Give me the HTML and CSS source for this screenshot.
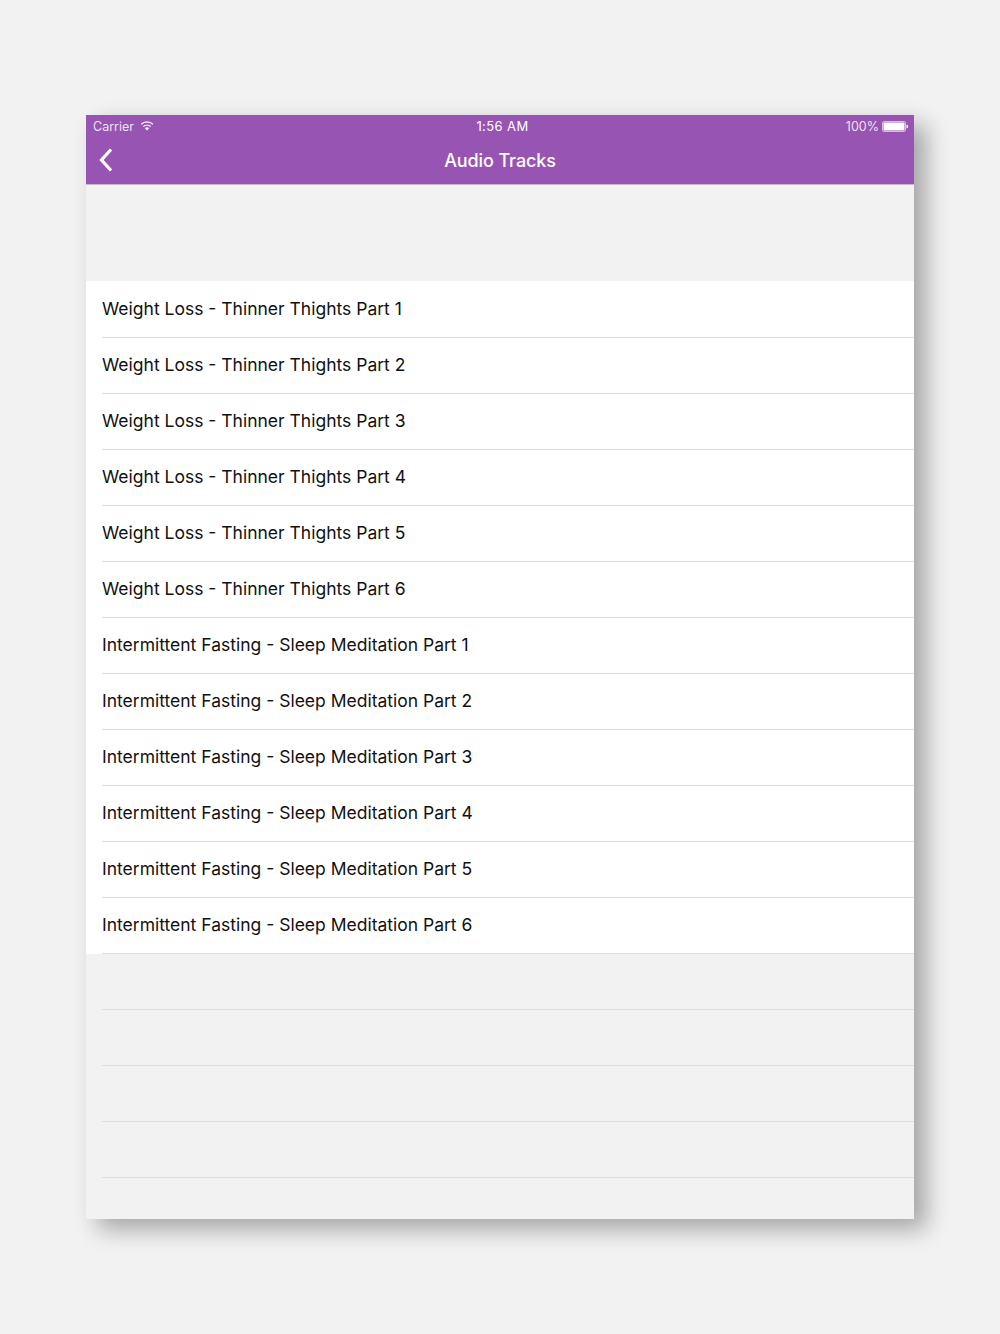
FILE: index.html
```html
<!DOCTYPE html>
<html lang="en">
<head>
<meta charset="utf-8">
<title>Audio Tracks</title>
<link rel="stylesheet" href="styles.css">
</head>
<body>
<main class="screen">
  <header class="appbar">
    <div class="status">
      <div class="status-left">
        <span>Carrier</span>
        <svg class="wifi" width="14" height="11" viewBox="0 0 14 11"><path d="M7 10.600 4.900 8.200a3 3 0 0 1 4.200 0Z" fill="#fff"/><path d="M3.400 6.600a5.200 5.200 0 0 1 7.200 0" fill="none" stroke="#fff" stroke-width="1.400"/><path d="M1.200 4.200a8.400 8.400 0 0 1 11.600 0" fill="none" stroke="#fff" stroke-width="1.400"/></svg>
      </div>
      <span class="clock">1:56 AM</span>
      <div class="status-right">
        <span>100%</span>
        <svg class="battery" width="26" height="11" viewBox="0 0 26 11"><rect x=".5" y=".5" width="23" height="10" rx="1.500" fill="none" stroke="#fff" stroke-opacity=".6"/><rect x="1.500" y="1.500" width="21" height="8" rx=".8" fill="#fff"/><path d="M24.500 3.700h.4a1 1 0 0 1 1 1v1.600a1 1 0 0 1-1 1h-.4Z" fill="#fff"/></svg>
      </div>
    </div>
    <div class="nav">
      <svg class="back" width="14" height="24" viewBox="0 0 14 24"><path d="M12 1.500 2.500 12l9.500 10.500" fill="none" stroke="#fff" stroke-width="3.200"/></svg>
      <h1 class="title">Audio Tracks</h1>
    </div>
  </header>
  <div class="spacer"></div>
  <ul class="list">
    <li class="row">Weight Loss - Thinner Thights Part 1</li>
    <li class="row">Weight Loss - Thinner Thights Part 2</li>
    <li class="row">Weight Loss - Thinner Thights Part 3</li>
    <li class="row">Weight Loss - Thinner Thights Part 4</li>
    <li class="row">Weight Loss - Thinner Thights Part 5</li>
    <li class="row">Weight Loss - Thinner Thights Part 6</li>
    <li class="row">Intermittent Fasting - Sleep Meditation Part 1</li>
    <li class="row">Intermittent Fasting - Sleep Meditation Part 2</li>
    <li class="row">Intermittent Fasting - Sleep Meditation Part 3</li>
    <li class="row">Intermittent Fasting - Sleep Meditation Part 4</li>
    <li class="row">Intermittent Fasting - Sleep Meditation Part 5</li>
    <li class="row">Intermittent Fasting - Sleep Meditation Part 6</li>
  </ul>
  <div class="empty">
    <div class="empty-row"></div>
    <div class="empty-row"></div>
    <div class="empty-row"></div>
    <div class="empty-row"></div>
  </div>
</main>
</body>
</html>
```
FILE: styles.css
```css
html, body {
  margin: 0;
  height: 100%;
}
body {
  background: #f2f2f2;
  font-family: Inter, "Liberation Sans", sans-serif;
  padding: 115px 86px 0;
  box-sizing: border-box;
}
.screen {
  width: 828px;
  height: 1104px;
  background: #f2f2f2;
  box-shadow: 12px 10px 22px rgba(0, 0, 0, 0.32);
  overflow: hidden;
  display: flex;
  flex-direction: column;
}
.appbar {
  height: 70px;
  background: #9854b2;
  color: #fff;
  border-bottom: 1px solid #c9b7d0;
  box-sizing: border-box;
  flex: none;
}
.status {
  height: 22px;
  display: grid;
  grid-template-columns: 1fr auto 1fr;
  align-items: center;
  padding: 0 6px 0 7px;
  font-size: 12.5px;
  color: rgba(255, 255, 255, 0.85);
}
.status-left {
  display: flex;
  align-items: center;
  gap: 6px;
}
.wifi {
  margin-top: -2px;
}
.clock {
  padding-left: 4px;
  font-size: 13px;
  letter-spacing: 0.4px;
  color: #fff;
}
.status-right {
  display: flex;
  justify-content: flex-end;
  align-items: center;
  gap: 3px;
}
.nav {
  height: 47px;
  display: flex;
  align-items: center;
  justify-content: center;
  position: relative;
}
.back {
  position: absolute;
  left: 13px;
  top: 11px;
}
.title {
  margin: 0;
  font-size: 18px;
  font-weight: 500;
  letter-spacing: -0.1px;
}
.spacer {
  height: 96px;
  flex: none;
}
.list {
  list-style: none;
  margin: 0;
  padding: 1px 0 0;
  background: #fff;
  flex: none;
}
.row {
  height: 56px;
  margin-left: 16px;
  padding-bottom: 2px;
  box-sizing: border-box;
  border-bottom: 1px solid #dcdcdc;
  display: flex;
  align-items: center;
  font-size: 17.5px;
  color: #111;
}
.empty-row {
  height: 56px;
  margin-left: 16px;
  box-sizing: border-box;
  border-bottom: 1px solid #dcdcdc;
}
```
